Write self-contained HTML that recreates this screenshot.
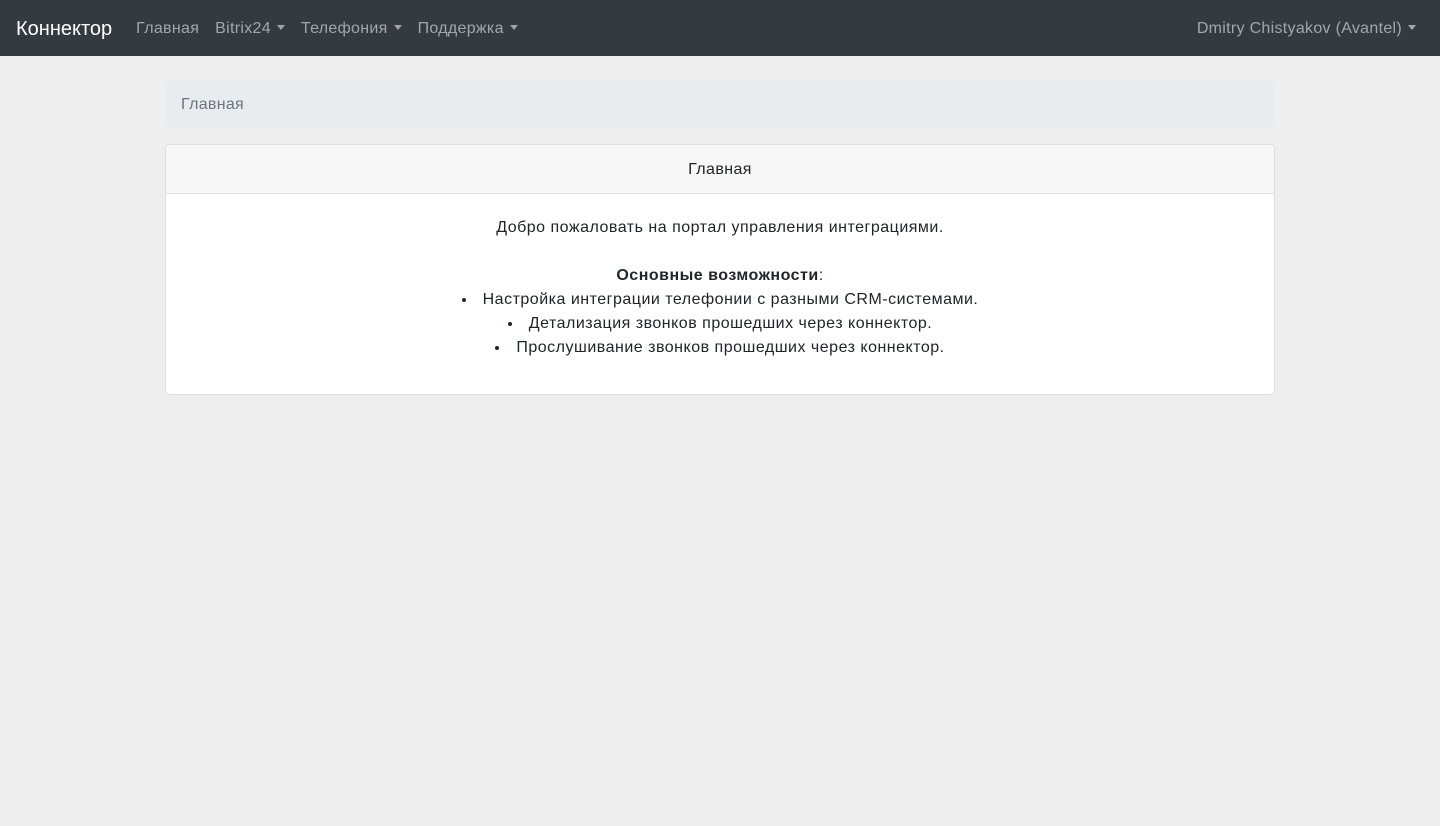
<!DOCTYPE html>
<html><head><meta charset="utf-8"><style>
*{box-sizing:border-box}
body{margin:0;background:#eeeeee;font-family:"Liberation Sans","Noto Sans CJK SC",sans-serif;font-size:16px;color:#212529;width:1440px;height:826px;overflow:hidden}
.nav{height:56px;background:#343a40;display:flex;align-items:center;padding:2px 16px 0;position:relative}
.brand{color:#fff;font-size:20px;margin-right:16px}
.nav a{color:rgba(255,255,255,.55);margin:0 8px;font-size:16px;text-decoration:none;letter-spacing:0.3px}
.dd:after{content:"";display:inline-block;margin-left:6px;vertical-align:3px;border-top:5px solid;border-left:4.5px solid transparent;border-right:4.5px solid transparent}
.user{position:absolute;right:16px}
.bc{position:absolute;left:166px;top:80px;width:1108px;height:48px;background:#e9ecef;border-radius:4px;padding:16px 15px;color:#6c757d;letter-spacing:0.3px}
.card{position:absolute;left:165px;top:144px;width:1110px;height:251px;background:#fff;border:1px solid #dfdfdf;border-radius:4px;overflow:hidden}
.ch{height:49px;background:#f7f7f7;border-bottom:1px solid #dfdfdf;text-align:center;line-height:50px;letter-spacing:0.4px}
.cb{text-align:center;padding-top:22px;line-height:24px;letter-spacing:0.5px}
ul{margin:0;padding:0;list-style-position:inside}
</style></head><body>
<div class="nav"><span class="brand">Коннектор</span><a>Главная</a><a class="dd">Bitrix24</a><a class="dd">Телефония</a><a class="dd">Поддержка</a><a class="dd user">Dmitry Chistyakov (Avantel)</a></div>
<div class="bc">Главная</div>
<div class="card"><div class="ch">Главная</div><div class="cb">Добро пожаловать на портал управления интеграциями.<br><br><b>Основные возможности</b>:
<ul><li>Настройка интеграции телефонии с разными CRM-системами.</li><li>Детализация звонков прошедших через коннектор.</li><li>Прослушивание звонков прошедших через коннектор.</li></ul></div></div>
</body></html>
